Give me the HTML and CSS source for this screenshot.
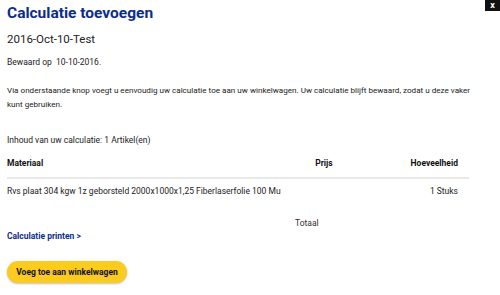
FILE: index.html
```html
<!DOCTYPE html>
<html lang="nl">
<head>
    <meta charset="UTF-8">
    <title>Calculatie toevoegen</title>
    <link rel="stylesheet" href="styles.css">
</head>
<body>
    <div class="modal">
        <button class="close-btn">x</button>
        <h2 class="modal-title">Calculatie toevoegen</h2>
        <p class="calc-name">2016-Oct-10-Test</p>
        <p class="saved-on">Bewaard op&nbsp; 10-10-2016.</p>
        <p class="intro">Via onderstaande knop voegt u eenvoudig uw calculatie toe aan uw winkelwagen. Uw calculatie blijft bewaard, zodat u deze vaker kunt gebruiken.</p>
        <p class="contents">Inhoud van uw calculatie: 1 Artikel(en)</p>
        <table class="calc-table">
            <thead>
                <tr>
                    <th class="col-material">Materiaal</th>
                    <th class="col-price">Prijs</th>
                    <th class="col-amount">Hoeveelheid</th>
                </tr>
            </thead>
            <tbody>
                <tr>
                    <td class="col-material">Rvs plaat 304 kgw 1z geborsteld 2000x1000x1,25 Fiberlaserfolie 100 Mu</td>
                    <td class="col-price"></td>
                    <td class="col-amount">1 Stuks</td>
                </tr>
            </tbody>
            <tfoot>
                <tr>
                    <td></td>
                    <td class="total">Totaal</td>
                    <td></td>
                </tr>
            </tfoot>
        </table>
        <a class="print-link" href="#">Calculatie printen &gt;</a>
        <button class="btn-cart">Voeg toe aan winkelwagen</button>
    </div>
</body>
</html>
```

FILE: styles.css
```css
* {
    margin: 0;
    padding: 0;
    box-sizing: border-box;
}
body {
    background: #fff;
    font-family: Roboto, "Liberation Sans", Arial, sans-serif;
    color: #222;
}
.modal {
    position: relative;
    width: 500px;
    height: 295px;
    padding: 3px 7px;
}
.close-btn {
    position: absolute;
    top: 0;
    right: 0;
    width: 15px;
    height: 11px;
    border: none;
    background: #111;
    color: #fff;
    font-family: Roboto, sans-serif;
    font-size: 9px;
    font-weight: bold;
    line-height: 9px;
}
.modal-title {
    font-size: 15.5px;
    line-height: 20px;
    font-weight: bold;
    color: #0b2d8a;
}
.calc-name {
    margin-top: 9px;
    font-size: 11.5px;
    line-height: 14px;
}
.saved-on {
    margin-top: 10px;
    font-size: 8.5px;
    line-height: 12px;
}
.intro {
    margin-top: 15px;
    font-size: 8.1px;
    line-height: 14px;
    width: 480px;
}
.contents {
    margin-top: 23px;
    font-size: 8.5px;
    line-height: 12px;
}
.calc-table {
    margin-top: 7px;
    width: 462px;
    border-collapse: collapse;
    font-size: 8.5px;
    line-height: 12px;
}
.calc-table th {
    font-weight: bold;
    color: #111;
    padding: 4px 0 8px;
    border-bottom: 2px solid #e9e9e9;
}
.calc-table tbody td {
    padding: 6px 0 7px;
}
.col-material {
    width: 283px;
    text-align: left;
}
.col-price {
    width: 68px;
    text-align: center;
}
.col-amount {
    width: 111px;
    text-align: right;
    padding-right: 11px !important;
}
.calc-table tfoot td {
    padding-top: 13px;
}
.calc-table .total {
    text-align: left;
    padding-left: 5px;
    color: #333;
}
.print-link {
    display: block;
    margin-top: 1px;
    font-size: 8.5px;
    line-height: 12px;
    font-weight: bold;
    color: #0b2d8a;
    text-decoration: none;
}
.btn-cart {
    display: block;
    margin-top: 19px;
    width: 120px;
    height: 22px;
    border: none;
    border-radius: 11px;
    background: #fbcb1d;
    box-shadow: 0 1px 2px rgba(0, 0, 0, 0.25);
    font-family: Roboto, "Liberation Sans", sans-serif;
    font-size: 8.5px;
    font-weight: bold;
    color: #111;
}
```
